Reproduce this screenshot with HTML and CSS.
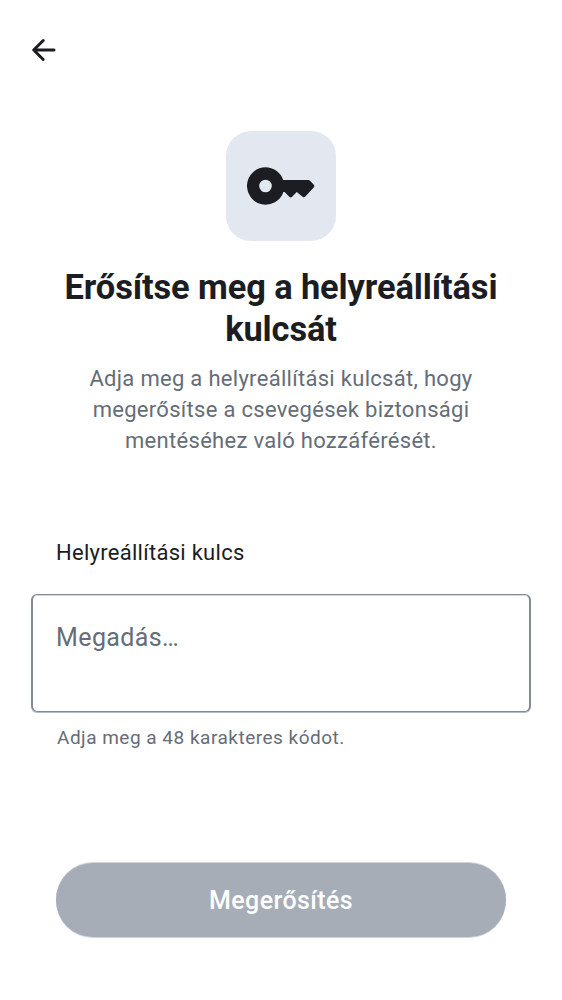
FILE: index.html
```html
<!DOCTYPE html>
<html lang="hu">
<head>
<meta charset="utf-8">
<title>Helyreállítási kulcs</title>
<link rel="stylesheet" href="styles.css">
</head>
<body>
<main class="screen">
  <header class="topbar">
    <svg class="back" viewBox="0 0 26 26" role="img" aria-label="Vissza"><path d="M23 13H3M12.200 3.500 2.700 13l9.500 9.500"/></svg>
  </header>
  <section class="hero">
    <div class="badge">
      <svg class="key" viewBox="0 0 68 38" aria-hidden="true"><path fill-rule="evenodd" d="M18.500.3a18.700 18.700 0 1 0 17.900 24.700H37.600L42.300 29.700a2 2 0 0 0 2.800 0L49.700 25.100 55.600 29.800a2 2 0 0 0 2.700-.2L66.700 20.400a2 2 0 0 0-.1-2.800L62.800 13.600a2 2 0 0 0-1.400-.6H36.200A18.700 18.700 0 0 0 18.500.3Zm0 12.400a6.300 6.300 0 1 1 0 12.600 6.300 6.300 0 0 1 0-12.600Z"/></svg>
    </div>
    <h1 class="title">Erősítse meg a helyreállítási<br>kulcsát</h1>
    <p class="lead">Adja meg a helyreállítási kulcsát, hogy<br>megerősítse a csevegések biztonsági<br>mentéséhez való hozzáférését.</p>
  </section>
  <section class="field">
    <div class="label">Helyreállítási kulcs</div>
    <div class="input">Megadás…</div>
    <div class="hint">Adja meg a 48 karakteres kódot.</div>
  </section>
  <button class="submit" type="button" disabled>Megerősítés</button>
</main>
</body>
</html>
```
FILE: styles.css
```css
body {
  margin: 0;
  background: #fff;
  color: #1b1d22;
  font-family: Roboto, sans-serif;
}

.screen {
  box-sizing: border-box;
  height: 1000px;
  padding: 37px 31px 0;
}

.topbar {
  height: 94px;
}

.back {
  display: block;
  width: 26px;
  height: 26px;
  fill: none;
  stroke: #1b1d22;
  stroke-width: 3;
  stroke-linecap: round;
  stroke-linejoin: round;
}

.hero {
  display: flex;
  flex-direction: column;
  align-items: center;
  text-align: center;
}

.badge {
  display: grid;
  place-items: center;
  width: 110px;
  height: 110px;
  border-radius: 25px;
  background: #e3e8f0;
}

.key {
  width: 68px;
  height: 38px;
  fill: #1b1d22;
}

.title {
  margin: 25px 0 0;
  font-size: 34.4px;
  font-weight: 700;
  line-height: 42px;
  letter-spacing: -0.1px;
  white-space: nowrap;
}

.lead {
  margin: 13px 0 0;
  color: #656d77;
  font-size: 22px;
  line-height: 31px;
  letter-spacing: 0.3px;
  white-space: nowrap;
}

.field {
  margin-top: 81px;
}

.label {
  padding-left: 25px;
  font-size: 22px;
  line-height: 32px;
  letter-spacing: 0.28px;
}

.input {
  box-sizing: border-box;
  height: 118px;
  margin-top: 25px;
  padding: 24px 23px;
  border: solid #818a95;
  border-width: 1px 2px;
  border-radius: 6px;
  box-shadow: inset 0 1px #d5d9df, 0 1px #b5bbc4;
  color: #656d77;
  font-size: 25px;
  line-height: 38px;
  letter-spacing: 0.4px;
}

.hint {
  margin-top: 13px;
  padding-left: 26px;
  color: #656d77;
  font-size: 19px;
  line-height: 26px;
  letter-spacing: 0.5px;
}

.submit {
  display: block;
  width: 450px;
  height: 74px;
  margin: 112px auto 0;
  padding: 0;
  border: 0;
  border-radius: 37px;
  background: #a6adb7;
  box-shadow: 0 -1px #d2d6db, 0 1px #d2d6db;
  color: #fff;
  font-family: Roboto, sans-serif;
  font-size: 25px;
  font-weight: 500;
  letter-spacing: 0.4px;
}
```
